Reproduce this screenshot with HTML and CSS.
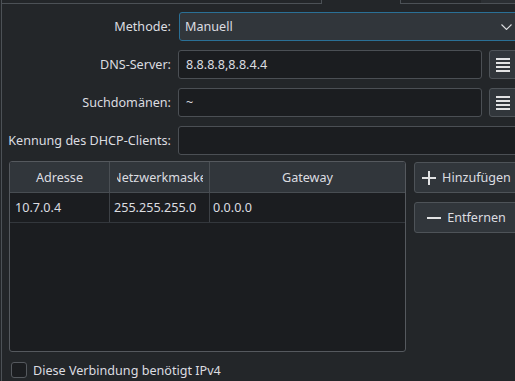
FILE: index.html
```html
<!DOCTYPE html>
<html>
<head>
<meta charset="utf-8">
<link rel="stylesheet" href="styles.css">
</head>
<body>
<div class="window">
  <div class="tabs">
    <div class="tab tab-first"></div>
    <div class="tab tab-active"></div>
    <div class="tab tab-third"></div>
    <div class="tab tab-rest"></div>
  </div>
  <div class="frame">
    <div class="form">
      <label class="label">Methode:</label>
      <div class="combo">
        <span>Manuell</span>
        <svg class="chevron" width="11" height="6" viewBox="0 0 11 6"><path d="M0.5 0.5 L5.5 5.5 L10.5 0.5" fill="none" stroke="#dcdde0" stroke-width="1.1"/></svg>
      </div>

      <label class="label">DNS-Server:</label>
      <div class="field-row">
        <div class="input">8.8.8.8,8.8.4.4</div>
        <div class="list-btn">
          <svg width="14" height="14" viewBox="0 0 14 14"><rect x="0" y="0" width="14" height="2" fill="#e2e3e4"/><rect x="0" y="4" width="14" height="2" fill="#e2e3e4"/><rect x="0" y="8" width="14" height="2" fill="#e2e3e4"/><rect x="0" y="12" width="14" height="2" fill="#e2e3e4"/></svg>
        </div>
      </div>

      <label class="label">Suchdomänen:</label>
      <div class="field-row">
        <div class="input">~</div>
        <div class="list-btn">
          <svg width="14" height="14" viewBox="0 0 14 14"><rect x="0" y="0" width="14" height="2" fill="#e2e3e4"/><rect x="0" y="4" width="14" height="2" fill="#e2e3e4"/><rect x="0" y="8" width="14" height="2" fill="#e2e3e4"/><rect x="0" y="12" width="14" height="2" fill="#e2e3e4"/></svg>
        </div>
      </div>

      <label class="label">Kennung des DHCP-Clients:</label>
      <div class="input"></div>
    </div>

    <div class="table-area">
      <div class="table">
        <div class="thead">
          <div class="th col1"><span class="clip"><span>Adresse</span></span></div>
          <div class="th col2"><span class="clip"><span>Netzwerkmaske</span></span></div>
          <div class="th col3"><span class="clip"><span>Gateway</span></span></div>
        </div>
        <div class="tr">
          <div class="td col1">10.7.0.4</div>
          <div class="td col2">255.255.255.0</div>
          <div class="td col3">0.0.0.0</div>
        </div>
      </div>
      <div class="side-buttons">
        <div class="btn">
          <svg width="14" height="14" viewBox="0 0 14 14"><rect x="6" y="0" width="2" height="14" fill="#e2e3e4"/><rect x="0" y="6" width="14" height="2" fill="#e2e3e4"/></svg>
          <span>Hinzufügen</span>
        </div>
        <div class="btn">
          <svg width="14" height="14" viewBox="0 0 14 14"><rect x="0" y="6" width="14" height="2" fill="#e2e3e4"/></svg>
          <span>Entfernen</span>
        </div>
      </div>
    </div>

    <div class="check-row">
      <span class="checkbox"></span>
      <span>Diese Verbindung benötigt IPv4</span>
    </div>
  </div>
</div>
</body>
</html>
```

FILE: styles.css
```css
html, body {
  margin: 0;
  padding: 0;
}
body {
  width: 515px;
  height: 381px;
  overflow: hidden;
  background: #232629;
  font-family: "Noto Sans", "DejaVu Sans", sans-serif;
  font-size: 12.6px;
  color: #dcdde0;
}
.window {
  width: 514px;
  margin-left: 1px;
  overflow: hidden;
}
.tabs {
  display: flex;
  height: 4px;
}
.tab {
  box-sizing: border-box;
  height: 4px;
}
.tab-first {
  width: 321px;
  border-bottom: 1px solid #4c5156;
  border-right: 1px solid #4c5156;
  border-left: 1px solid #4c5156;
}
.tab-active {
  width: 78px;
}
.tab-third {
  width: 81px;
  border-left: 1px solid #4c5156;
  border-bottom: 1px solid #4c5156;
}
.tab-rest {
  flex: 1;
  background: #2b2f33;
  border-bottom: 1px solid #4c5156;
}
.frame {
  box-sizing: border-box;
  width: 526px;
  height: 377px;
  border-left: 1px solid #4c5156;
  padding: 8px 7px 0 7px;
}
.form {
  display: grid;
  grid-template-columns: 162px 1fr;
  column-gap: 7px;
  row-gap: 9px;
  grid-auto-rows: 29px;
}
.label {
  display: flex;
  align-items: center;
  justify-content: flex-end;
  white-space: nowrap;
}
.combo {
  box-sizing: border-box;
  margin-left: 1px;
  height: 29px;
  background: #31363b;
  border: 1px solid #2a7096;
  border-radius: 3px;
  display: flex;
  align-items: center;
  justify-content: space-between;
  padding: 0 7px 0 5px;
}
.chevron {
  display: block;
}
.field-row {
  display: flex;
  gap: 7px;
}
.input {
  box-sizing: border-box;
  flex: 1;
  height: 29px;
  background: #1b1d20;
  border: 1px solid #4b4f54;
  border-radius: 3px;
  display: flex;
  align-items: center;
  padding: 0 7px;
}
.list-btn {
  box-sizing: border-box;
  width: 31px;
  height: 29px;
  background: #31363b;
  border: 1px solid #4e5358;
  border-radius: 3px;
  display: flex;
  align-items: center;
  padding-left: 6px;
}
.list-btn svg {
  display: block;
}
.table-area {
  display: flex;
  gap: 8px;
  margin-top: 6px;
}
.table {
  box-sizing: border-box;
  width: 397px;
  height: 191px;
  background: #1b1d20;
  border: 1px solid #55595e;
  border-radius: 3px;
  overflow: hidden;
}
.thead {
  display: flex;
  height: 31px;
  box-sizing: border-box;
  background: #31363b;
  border-bottom: 1px solid #484d52;
}
.tr {
  display: flex;
  height: 30px;
  box-sizing: border-box;
  border-bottom: 1px solid #33373c;
}
.col1, .col2 {
  box-sizing: border-box;
  width: 100px;
  border-right: 1px solid #3d4146;
}
.col3 {
  flex: 1;
}
.thead .col1, .thead .col2 {
  border-right-color: #4a4f54;
}
.th {
  display: flex;
  align-items: center;
  justify-content: center;
  min-width: 0;
}
.clip {
  display: flex;
  justify-content: center;
  overflow: hidden;
  width: calc(100% - 13px);
  white-space: nowrap;
}
.clip span {
  flex-shrink: 0;
}
.td {
  display: flex;
  align-items: center;
  padding-left: 4px;
  white-space: nowrap;
}
.td.col1 {
  padding-left: 5px;
}
.td.col3 {
  padding-left: 3px;
}
.side-buttons {
  display: flex;
  flex-direction: column;
  gap: 9px;
  margin-top: 1px;
  width: 105px;
}
.btn {
  box-sizing: border-box;
  height: 31px;
  background: #31363b;
  border: 1px solid #4e5358;
  border-radius: 3px;
  display: flex;
  align-items: center;
  justify-content: center;
  gap: 6px;
  white-space: nowrap;
}
.btn svg {
  display: block;
  flex-shrink: 0;
}
.check-row {
  display: flex;
  align-items: center;
  gap: 6px;
  margin-top: 10px;
  padding-left: 2px;
  height: 16px;
}
.checkbox {
  box-sizing: border-box;
  width: 16px;
  height: 16px;
  background: #1b1d20;
  border: 1px solid #55595e;
  border-radius: 3px;
}
```
